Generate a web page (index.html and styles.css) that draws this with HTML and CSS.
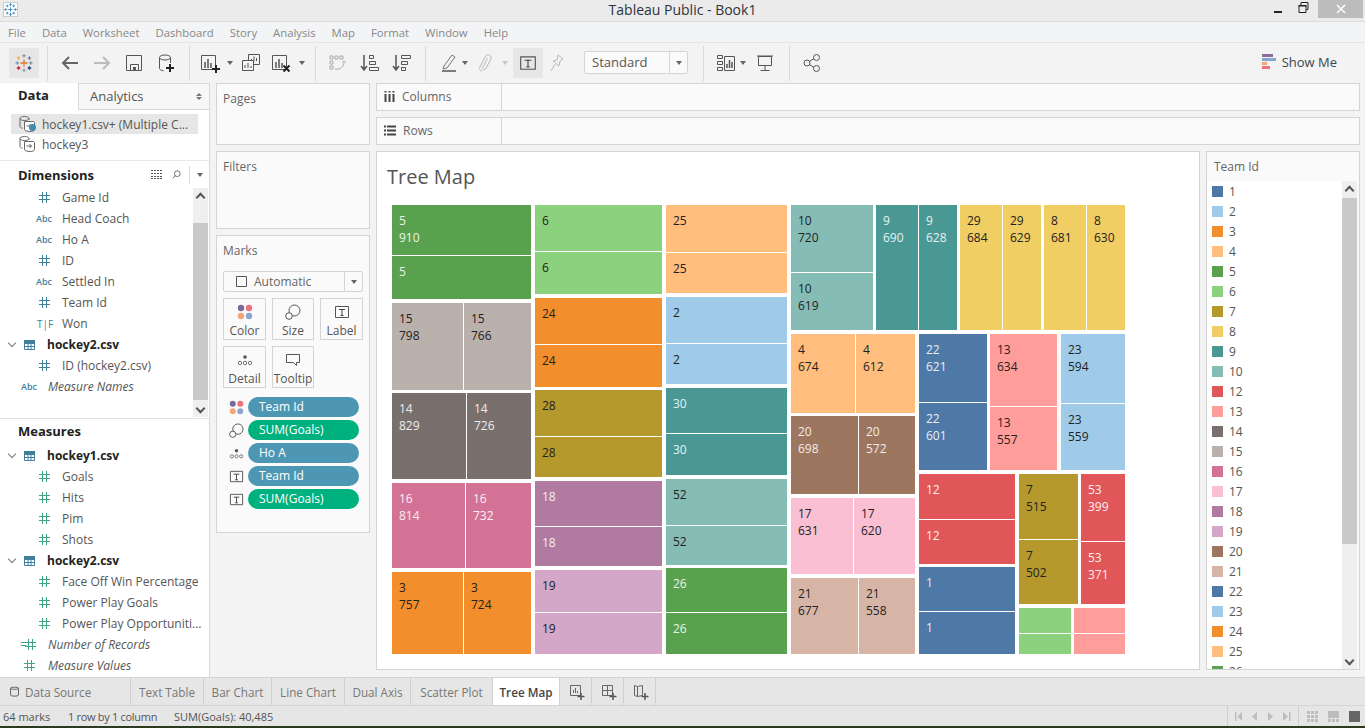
FILE: index.html
```html
<!DOCTYPE html>
<html lang="en">
<head>
    <meta charset="UTF-8">
    <title>Tableau Public - Book1</title>
    <link rel="stylesheet" href="styles.css">
</head>
<body>
<svg class="sprite" width="0" height="0">
    <defs>
        <symbol id="hash" viewBox="0 0 11 11"><path d="M3.500 0v11M7.500 0v11M0 3.500h11M0 7.500h11" fill="none" stroke="currentColor"/></symbol>
        <symbol id="table" viewBox="0 0 11 11"><path d="M.5 1.500h10v9H.5zM.5 4.500h10M.5 7.500h10M4 1.500v9M7 1.500v9" fill="none" stroke="currentColor"/><path d="M0 1h11v3H0z" fill="currentColor"/></symbol>
        <symbol id="tbox" viewBox="0 0 16 16"><path d="M1.500 2.500h13v11h-13z" fill="none" stroke="#555"/><path d="M5 5.500h6M8 5.500v6M6.500 11.500h3" fill="none" stroke="#444"/></symbol>
        <symbol id="dots" viewBox="0 0 16 16"><circle cx="4" cy="4" r="3.200" fill="#7a6a99"/><circle cx="12" cy="4" r="3.200" fill="#f0707f"/><circle cx="4" cy="12" r="3.200" fill="#f4a678"/><circle cx="12" cy="12" r="3.200" fill="#8ba7cf"/></symbol>
        <symbol id="size" viewBox="0 0 16 16"><circle cx="9.500" cy="6.500" r="5.500" fill="none" stroke="#555"/><circle cx="4" cy="12" r="3.300" fill="#fafafa" stroke="#555"/></symbol>
        <symbol id="detail" viewBox="0 0 16 16"><circle cx="8" cy="5" r="1.800" fill="#555"/><circle cx="3" cy="11" r="1.700" fill="none" stroke="#555" stroke-width=".8"/><circle cx="8" cy="11" r="1.700" fill="none" stroke="#555" stroke-width=".8"/><circle cx="13" cy="11" r="1.700" fill="none" stroke="#555" stroke-width=".8"/></symbol>
        <symbol id="cyl" viewBox="0 0 16 16">
            <path d="M1 2.500C1 1.300 3 .5 5.500 .5S10 1.300 10 2.500M1 2.500c0 1.200 2 2 4.500 2S10 3.700 10 2.500M1 2.500v8c0 .8 1 1.500 2.500 1.800M10 2.500v1.500" fill="none" stroke="#666"/>
            <path d="M5.500 5.500h8.500c1 0 1.500 .5 1.500 1.500v6.500c0 1.200-2 2-4.500 2s-5.500-.8-5.500-2z" fill="#fff" stroke="#666"/>
            <path d="M7.500 10h5M10.500 8l2 2-2 2" fill="none" stroke="#666"/>
        </symbol>
        <symbol id="logo" viewBox="0 0 20 20">
            <path d="M10 6v8M6 10h8" stroke="#e8762b" stroke-width="1.500"/>
            <path d="M4 2.500v4M2 4.500h4" stroke="#e8a33d" stroke-width="1"/>
            <path d="M10 0v4M8 2h4" stroke="#5b879b" stroke-width="1"/>
            <path d="M16 2.500v4M14 4.500h4" stroke="#5b6591" stroke-width="1"/>
            <path d="M2.500 8v4M.5 10h4" stroke="#5b879b" stroke-width="1"/>
            <path d="M17.500 8v4M15.500 10h4" stroke="#5b879b" stroke-width="1"/>
            <path d="M4 13.500v4M2 15.500h4" stroke="#c72035" stroke-width="1.500"/>
            <path d="M10 16v4M8 18h4" stroke="#7099a6" stroke-width="1"/>
            <path d="M16 13.500v4M14 15.500h4" stroke="#1f447e" stroke-width="1.500"/>
        </symbol>
    </defs>
</svg>

<div class="app">
    <div class="titlebar">
        <div class="appicon">
            <svg width="13" height="13" viewBox="0 0 20 20"><path d="M10 6.500v7M6.500 10h7M10 0v5M8 2.500h4M10 15v5M8 17.500h4M2.500 8v4M0 10h5M17.500 8v4M15 10h5M5 2.500v4M3 4.500h4M15 2.500v4M13 4.500h4M5 13.500v4M3 15.500h4M15 13.500v4M13 15.500h4" stroke="#3b86bd" stroke-width="1.300" fill="none"/></svg>
        </div>
        <div class="apptitle">Tableau Public - Book1</div>
        <div class="winbtns">
            <svg class="winbtn" width="10" height="14" viewBox="0 0 10 14"><path d="M1 11h8" stroke="#222" stroke-width="2"/></svg>
            <svg class="winbtn ml15" width="11" height="14" viewBox="0 0 10 14"><path d="M.5 4.500h7v7h-7zM2.500 4V1.500h7v7H8" fill="none" stroke="#222"/><path d="M0 4h8v1.500H0z" fill="#222"/></svg>
            <div class="closebtn">
                <svg width="10" height="10" viewBox="0 0 10 10"><path d="M1 1l8 8M9 1l-8 8" stroke="#fff" stroke-width="1.500"/></svg>
            </div>
        </div>
    </div>

    <div class="menubar">
        <span>File</span><span>Data</span><span>Worksheet</span><span>Dashboard</span><span>Story</span><span>Analysis</span><span>Map</span><span>Format</span><span>Window</span><span>Help</span>
    </div>

    <div class="toolbar">
        <div class="toolon"><svg width="18" height="18"><use href="#logo"/></svg></div>
        <i class="sep ml8"></i>
        <svg class="tool ml12" viewBox="0 0 20 20"><path d="M18 10H3M9 4l-6 6 6 6" fill="none" stroke="#666" stroke-width="2"/></svg>
        <svg class="tool ml12" viewBox="0 0 20 20"><path d="M2 10h15M11 4l6 6-6 6" fill="none" stroke="#bbb" stroke-width="2"/></svg>
        <svg class="tool ml12" viewBox="0 0 20 20"><path d="M2.500 2.500h15v15h-15zM6.500 17.500v-6h8v6" fill="none" stroke="#555"/><path d="M9 14h3v3H9z" fill="#555"/></svg>
        <svg class="tool ml12" viewBox="0 0 20 20"><ellipse cx="9" cy="4.500" rx="5.500" ry="2.500" fill="none" stroke="#555"/><path d="M3.500 4.500v11c0 1 1.500 2 4 2.300M14.500 4.500V10" fill="none" stroke="#555"/><path d="M14 11v8M10 15h8" stroke="#222" stroke-width="2"/></svg>
        <i class="sep ml13"></i>
        <svg class="tool ml10" viewBox="0 0 20 20"><path d="M1.500 2.500h14v14h-14z" fill="none" stroke="#555"/><path d="M5 9v6M8 6v9M11 10v5" stroke="#555" stroke-width="1.500"/><path d="M16 12v8M12 16h8" stroke="#222" stroke-width="2"/></svg>
        <i class="caret ml7"></i>
        <svg class="tool ml8" viewBox="0 0 20 20"><path d="M7.500 1.500h11v10h-11z" fill="#f3f3f3" stroke="#555"/><path d="M10.500 8V6M13 8V3.500M15.500 8V5" stroke="#555"/><path d="M1.500 7.500h11v10h-11z" fill="#f3f3f3" stroke="#555"/><path d="M4 15v-3M7 15v-5M10 15v-2" stroke="#555"/></svg>
        <svg class="tool ml10" viewBox="0 0 20 20"><path d="M1.500 2.500h14v14h-14z" fill="none" stroke="#555"/><path d="M5 9v6M8 6v9M11 10v5" stroke="#555" stroke-width="1.500"/><path d="M12.500 12.500l6 6M18.500 12.500l-6 6" stroke="#222" stroke-width="2"/></svg>
        <i class="caret ml8"></i>
        <i class="sep ml10"></i>
        <svg class="tool ml11 faded" viewBox="0 0 20 20"><path d="M3 3h3v3H3zM8 3h3v3H8zM13 3h3v3h-3zM3 8h3v3H3zM3 13h3v3H3zM8 16c4 1 8-1 9-6" fill="none" stroke="#999"/><path d="M15 10l2-2 2 2" fill="none" stroke="#999"/></svg>
        <svg class="tool ml13" viewBox="0 0 20 20"><path d="M4 2v14M1 13l3 4 3-4" fill="none" stroke="#555" stroke-width="1.500"/><path d="M9.500 2.500h4v3h-4zM9.500 8.500h6v3h-6zM9.500 14.500h9v3h-9z" fill="none" stroke="#555"/></svg>
        <svg class="tool ml12" viewBox="0 0 20 20"><path d="M4 2v14M1 13l3 4 3-4" fill="none" stroke="#555" stroke-width="1.500"/><path d="M9.500 2.500h9v3h-9zM9.500 8.500h6v3h-6zM9.500 14.500h4v3h-4z" fill="none" stroke="#555"/></svg>
        <i class="sep ml13"></i>
        <svg class="tool ml13" viewBox="0 0 20 20"><path d="M5 13l8-11 3 2-8 11-4 1z" fill="none" stroke="#777"/><path d="M3 18h14" stroke="#555" stroke-width="1.500"/></svg>
        <i class="caret ml3"></i>
        <svg class="tool ml7 faded" viewBox="0 0 20 20"><path d="M7 18c-2 0-3-2-2-4l5-10c1-2 3-3 4.500-2s2 3 1 5l-5 9c-.5 1-2 1-2.500 0s0-2 .5-3l4-8" fill="none" stroke="#aaa"/></svg>
        <i class="caret ml7 faded"></i>
        <div class="toolon ml5"><svg width="18" height="18"><use href="#tbox"/></svg></div>
        <svg class="tool ml4 faded" viewBox="0 0 20 20"><path d="M11 2l5 4-3 2-1 5-6-5 4-1zM8 11l-4 7" fill="none" stroke="#aaa"/></svg>
        <div class="select ml17"><span class="selecttext">Standard</span><span class="selectarrow"><i class="caret"></i></span></div>
        <i class="sep ml15"></i>
        <svg class="tool ml12" viewBox="0 0 20 20"><path d="M1.500 2.500h5v3h-5zM1.500 8.500h5v3h-5zM1.500 14.500h5v3h-5zM8.500 3.500h10v14h-10z" fill="none" stroke="#555"/><path d="M11 15v-4M13.500 15V7M16 15v-6" stroke="#555" stroke-width="1.500"/></svg>
        <i class="caret ml4"></i>
        <svg class="tool ml9" viewBox="0 0 20 20"><path d="M2 3h16M3.500 3.500h13v9h-13zM10 12.500v5M5.500 17.500h9" fill="none" stroke="#555"/></svg>
        <i class="sep ml14"></i>
        <svg class="tool ml12" viewBox="0 0 20 20"><circle cx="5" cy="10" r="3" fill="none" stroke="#555"/><circle cx="14.500" cy="4.500" r="3" fill="none" stroke="#555"/><circle cx="14.500" cy="15.500" r="3" fill="none" stroke="#555"/><path d="M7.500 8.500l4.500-3M7.500 11.500l4.500 3" stroke="#555"/></svg>
        <div class="showme">
            <svg width="14" height="16" viewBox="0 0 14 16"><path d="M0 0h11v3H0z" fill="#8b6f9b"/><path d="M0 4h14v3H0z" fill="#86a6cf"/><path d="M0 8h5v3H0z" fill="#f2a675"/><path d="M0 12h8v3H0z" fill="#f0707f"/></svg>
            <span>Show Me</span>
        </div>
    </div>

    <div class="workspace">
        <div class="datapane">
            <div class="panetabs">
                <div class="panetab active">Data</div>
                <div class="panetab">Analytics<span class="updown"></span></div>
            </div>
            <div class="sources">
                <div class="source selected"><svg width="16" height="16"><use href="#cyl"/></svg><i class="tick"></i><span>hockey1.csv+ (Multiple C...</span></div>
                <div class="source"><svg width="16" height="16"><use href="#cyl"/></svg><span>hockey3</span></div>
            </div>
            <div class="panehead dims">
                <span>Dimensions</span>
                <svg class="headicon" width="12" height="9" viewBox="0 0 12 9"><path d="M0 .5h12M0 3.500h12M0 6.500h12M0 8.500h12" stroke="#555" stroke-dasharray="2 1"/></svg>
                <svg class="headicon search" width="9" height="9" viewBox="0 0 11 11"><circle cx="6.500" cy="4.500" r="3.500" fill="none" stroke="#555"/><path d="M4 7L1 10" stroke="#555"/></svg>
                <i class="headsep"></i>
                <i class="caret"></i>
            </div>
            <div class="dimbody">
                <div class="fields">
                    <div class="field"><svg class="hash dim"><use href="#hash"/></svg>Game Id</div>
                    <div class="field"><b class="abc">Abc</b>Head Coach</div>
                    <div class="field"><b class="abc">Abc</b>Ho A</div>
                    <div class="field"><svg class="hash dim"><use href="#hash"/></svg>ID</div>
                    <div class="field"><b class="abc">Abc</b>Settled In</div>
                    <div class="field"><svg class="hash dim"><use href="#hash"/></svg>Team Id</div>
                    <div class="field"><b class="abc tf">T|F</b>Won</div>
                    <div class="tablehead"><i class="chev"></i><svg class="tableicon"><use href="#table"/></svg>hockey2.csv</div>
                    <div class="field"><svg class="hash dim"><use href="#hash"/></svg>ID (hockey2.csv)</div>
                    <div class="field calc"><b class="abc">Abc</b>Measure Names</div>
                </div>
                <div class="scroll">
                    <div class="scrollbtn"><i class="arrowup"></i></div>
                    <div class="thumb"></div>
                    <div class="scrollbtn low"><i class="arrowdown"></i></div>
                </div>
            </div>
            <div class="panehead meas">Measures</div>
            <div class="tablehead"><i class="chev"></i><svg class="tableicon"><use href="#table"/></svg>hockey1.csv</div>
            <div class="field"><svg class="hash mea"><use href="#hash"/></svg>Goals</div>
            <div class="field"><svg class="hash mea"><use href="#hash"/></svg>Hits</div>
            <div class="field"><svg class="hash mea"><use href="#hash"/></svg>Pim</div>
            <div class="field"><svg class="hash mea"><use href="#hash"/></svg>Shots</div>
            <div class="tablehead"><i class="chev"></i><svg class="tableicon"><use href="#table"/></svg>hockey2.csv</div>
            <div class="field"><svg class="hash mea"><use href="#hash"/></svg>Face Off Win Percentage</div>
            <div class="field"><svg class="hash mea"><use href="#hash"/></svg>Power Play Goals</div>
            <div class="field"><svg class="hash mea"><use href="#hash"/></svg>Power Play Opportuniti...</div>
            <div class="field calc records"><span class="eqhash">=</span><svg class="hash mea"><use href="#hash"/></svg>Number of Records</div>
            <div class="field calc"><svg class="hash mea"><use href="#hash"/></svg>Measure Values</div>
        </div>

        <div class="cards">
            <div class="card pages"><div class="cardtitle">Pages</div></div>
            <div class="card filters"><div class="cardtitle">Filters</div></div>
            <div class="card marks">
                <div class="cardtitle">Marks</div>
                <div class="marktype">
                    <svg width="11" height="11" viewBox="0 0 11 11"><path d="M.5.5h10v10H.5z" fill="none" stroke="#555"/></svg>
                    <span>Automatic</span>
                    <span class="marktypearrow"><i class="caret"></i></span>
                </div>
                <div class="markbtns">
                    <div class="markbtn"><svg width="16" height="16"><use href="#dots"/></svg>Color</div>
                    <div class="markbtn"><svg width="16" height="16"><use href="#size"/></svg>Size</div>
                    <div class="markbtn"><svg width="16" height="16"><use href="#tbox"/></svg>Label</div>
                    <div class="markbtn"><svg width="16" height="16"><use href="#detail"/></svg>Detail</div>
                    <div class="markbtn"><svg width="16" height="16" viewBox="0 0 16 16"><path d="M1.500 2.500h13v8h-3v3l-3-3h-7z" fill="none" stroke="#555"/></svg>Tooltip</div>
                </div>
                <div class="pills">
                    <div class="pillrow"><svg width="15" height="15"><use href="#dots"/></svg><span class="pill blue">Team Id</span></div>
                    <div class="pillrow"><svg width="15" height="15"><use href="#size"/></svg><span class="pill green">SUM(Goals)</span></div>
                    <div class="pillrow"><svg width="15" height="15"><use href="#detail"/></svg><span class="pill blue">Ho A</span></div>
                    <div class="pillrow"><svg width="15" height="15"><use href="#tbox"/></svg><span class="pill blue">Team Id</span></div>
                    <div class="pillrow"><svg width="15" height="15"><use href="#tbox"/></svg><span class="pill green">SUM(Goals)</span></div>
                </div>
            </div>
        </div>

        <div class="sheet">
            <div class="shelf">
                <div class="shelflabel"><svg width="11" height="11" viewBox="0 0 11 11"><path d="M1.500 3v8M5.500 3v8M9.500 3v8M1.500 0v1.500M5.500 0v1.500M9.500 0v1.500" stroke="#444" stroke-width="2"/></svg>Columns</div>
            </div>
            <div class="shelf">
                <div class="shelflabel"><svg width="12" height="11" viewBox="0 0 12 11"><path d="M3 1.500h9M3 5.500h9M3 9.500h9M0 1.500h2M0 5.500h2M0 9.500h2" stroke="#444" stroke-width="2"/></svg>Rows</div>
            </div>
            <div class="viewrow">
                <div class="chart">
                    <div class="charttitle">Tree Map</div>
                    <div class="treemap">
                        <div class="tile c5" style="left:0;top:0;width:139px;height:50px">5<br>910</div>
                        <div class="tile c5" style="left:0;top:51px;width:139px;height:43px">5</div>
                        <div class="tile c15" style="left:0;top:98px;width:71px;height:87px">15<br>798</div>
                        <div class="tile c15" style="left:72px;top:98px;width:67px;height:87px">15<br>766</div>
                        <div class="tile c14" style="left:0;top:188px;width:74px;height:86px">14<br>829</div>
                        <div class="tile c14" style="left:75px;top:188px;width:64px;height:86px">14<br>726</div>
                        <div class="tile c16" style="left:0;top:278px;width:73px;height:85px">16<br>814</div>
                        <div class="tile c16" style="left:74px;top:278px;width:65px;height:85px">16<br>732</div>
                        <div class="tile c3" style="left:0;top:367px;width:71px;height:82px">3<br>757</div>
                        <div class="tile c3" style="left:72px;top:367px;width:67px;height:82px">3<br>724</div>

                        <div class="tile c6" style="left:143px;top:0;width:127px;height:46px">6</div>
                        <div class="tile c6" style="left:143px;top:47px;width:127px;height:42px">6</div>
                        <div class="tile c3" style="left:143px;top:93px;width:127px;height:46px">24</div>
                        <div class="tile c3" style="left:143px;top:140px;width:127px;height:42px">24</div>
                        <div class="tile c7" style="left:143px;top:185px;width:127px;height:46px">28</div>
                        <div class="tile c7" style="left:143px;top:232px;width:127px;height:40px">28</div>
                        <div class="tile c18" style="left:143px;top:276px;width:127px;height:45px">18</div>
                        <div class="tile c18" style="left:143px;top:322px;width:127px;height:39px">18</div>
                        <div class="tile c19" style="left:143px;top:365px;width:127px;height:42px">19</div>
                        <div class="tile c19" style="left:143px;top:408px;width:127px;height:41px">19</div>

                        <div class="tile c4" style="left:274px;top:0;width:121px;height:47px">25</div>
                        <div class="tile c4" style="left:274px;top:48px;width:121px;height:40px">25</div>
                        <div class="tile c2" style="left:274px;top:92px;width:121px;height:46px">2</div>
                        <div class="tile c2" style="left:274px;top:139px;width:121px;height:40px">2</div>
                        <div class="tile c9" style="left:274px;top:183px;width:121px;height:45px">30</div>
                        <div class="tile c9" style="left:274px;top:229px;width:121px;height:41px">30</div>
                        <div class="tile c10" style="left:274px;top:274px;width:121px;height:46px">52</div>
                        <div class="tile c10" style="left:274px;top:321px;width:121px;height:39px">52</div>
                        <div class="tile c5" style="left:274px;top:363px;width:121px;height:44px">26</div>
                        <div class="tile c5" style="left:274px;top:408px;width:121px;height:41px">26</div>

                        <div class="tile c10" style="left:399px;top:0;width:82px;height:67px">10<br>720</div>
                        <div class="tile c10" style="left:399px;top:68px;width:82px;height:57px">10<br>619</div>
                        <div class="tile c9" style="left:484px;top:0;width:42px;height:125px">9<br>690</div>
                        <div class="tile c9" style="left:527px;top:0;width:38px;height:125px">9<br>628</div>
                        <div class="tile c8" style="left:568px;top:0;width:42px;height:125px">29<br>684</div>
                        <div class="tile c8" style="left:611px;top:0;width:38px;height:125px">29<br>629</div>
                        <div class="tile c8" style="left:652px;top:0;width:42px;height:125px">8<br>681</div>
                        <div class="tile c8" style="left:695px;top:0;width:38px;height:125px">8<br>630</div>

                        <div class="tile c4" style="left:399px;top:129px;width:64px;height:79px">4<br>674</div>
                        <div class="tile c4" style="left:464px;top:129px;width:59px;height:79px">4<br>612</div>
                        <div class="tile c20" style="left:399px;top:211px;width:67px;height:78px">20<br>698</div>
                        <div class="tile c20" style="left:467px;top:211px;width:56px;height:78px">20<br>572</div>
                        <div class="tile c17" style="left:399px;top:293px;width:62px;height:76px">17<br>631</div>
                        <div class="tile c17" style="left:462px;top:293px;width:61px;height:76px">17<br>620</div>
                        <div class="tile c21" style="left:399px;top:373px;width:67px;height:76px">21<br>677</div>
                        <div class="tile c21" style="left:467px;top:373px;width:56px;height:76px">21<br>558</div>

                        <div class="tile c1" style="left:527px;top:129px;width:68px;height:68px">22<br>621</div>
                        <div class="tile c1" style="left:527px;top:198px;width:68px;height:67px">22<br>601</div>
                        <div class="tile c13" style="left:598px;top:129px;width:67px;height:72px">13<br>634</div>
                        <div class="tile c13" style="left:598px;top:202px;width:67px;height:63px">13<br>557</div>
                        <div class="tile c2" style="left:669px;top:129px;width:64px;height:69px">23<br>594</div>
                        <div class="tile c2" style="left:669px;top:199px;width:64px;height:66px">23<br>559</div>

                        <div class="tile c12" style="left:527px;top:269px;width:96px;height:45px">12</div>
                        <div class="tile c12" style="left:527px;top:315px;width:96px;height:44px">12</div>
                        <div class="tile c1" style="left:527px;top:362px;width:96px;height:44px">1</div>
                        <div class="tile c1" style="left:527px;top:407px;width:96px;height:42px">1</div>
                        <div class="tile c7" style="left:627px;top:269px;width:59px;height:65px">7<br>515</div>
                        <div class="tile c7" style="left:627px;top:335px;width:59px;height:64px">7<br>502</div>
                        <div class="tile c12" style="left:689px;top:269px;width:44px;height:67px">53<br>399</div>
                        <div class="tile c12" style="left:689px;top:337px;width:44px;height:62px">53<br>371</div>
                        <div class="tile c6" style="left:627px;top:403px;width:52px;height:25px"></div>
                        <div class="tile c6" style="left:627px;top:429px;width:52px;height:20px"></div>
                        <div class="tile c13" style="left:682px;top:403px;width:51px;height:25px"></div>
                        <div class="tile c13" style="left:682px;top:429px;width:51px;height:20px"></div>
                    </div>
                </div>
                <div class="legend">
                    <div class="legendtitle">Team Id</div>
                    <div class="legendbody">
                        <div class="legenditems">
                            <div class="legenditem"><i class="swatch c1"></i>1</div>
                            <div class="legenditem"><i class="swatch c2"></i>2</div>
                            <div class="legenditem"><i class="swatch c3"></i>3</div>
                            <div class="legenditem"><i class="swatch c4"></i>4</div>
                            <div class="legenditem"><i class="swatch c5"></i>5</div>
                            <div class="legenditem"><i class="swatch c6"></i>6</div>
                            <div class="legenditem"><i class="swatch c7"></i>7</div>
                            <div class="legenditem"><i class="swatch c8"></i>8</div>
                            <div class="legenditem"><i class="swatch c9"></i>9</div>
                            <div class="legenditem"><i class="swatch c10"></i>10</div>
                            <div class="legenditem"><i class="swatch c12"></i>12</div>
                            <div class="legenditem"><i class="swatch c13"></i>13</div>
                            <div class="legenditem"><i class="swatch c14"></i>14</div>
                            <div class="legenditem"><i class="swatch c15"></i>15</div>
                            <div class="legenditem"><i class="swatch c16"></i>16</div>
                            <div class="legenditem"><i class="swatch c17"></i>17</div>
                            <div class="legenditem"><i class="swatch c18"></i>18</div>
                            <div class="legenditem"><i class="swatch c19"></i>19</div>
                            <div class="legenditem"><i class="swatch c20"></i>20</div>
                            <div class="legenditem"><i class="swatch c21"></i>21</div>
                            <div class="legenditem"><i class="swatch c1"></i>22</div>
                            <div class="legenditem"><i class="swatch c2"></i>23</div>
                            <div class="legenditem"><i class="swatch c3"></i>24</div>
                            <div class="legenditem"><i class="swatch c4"></i>25</div>
                            <div class="legenditem"><i class="swatch c5"></i>26</div>
                        </div>
                        <div class="scroll legendscroll">
                            <div class="scrollbtn"><i class="arrowup"></i></div>
                            <div class="thumb"></div>
                            <div class="scrollbtn low"><i class="arrowdown"></i></div>
                        </div>
                    </div>
                </div>
            </div>
        </div>
    </div>

    <div class="tabs">
        <div class="tab datasource"><svg width="9" height="11" viewBox="0 0 9 11"><path d="M.5 2c0-1 8-1 8 0v7c0 1.500-8 1.500-8 0zM.5 2.500c0 1 8 1 8 0" fill="none" stroke="#666"/></svg>Data Source</div>
        <div class="tab w73">Text Table</div>
        <div class="tab w68">Bar Chart</div>
        <div class="tab w73">Line Chart</div>
        <div class="tab w66">Dual Axis</div>
        <div class="tab w82">Scatter Plot</div>
        <div class="tab current">Tree Map</div>
        <div class="tab newtab"><svg width="16" height="16" viewBox="0 0 16 16"><path d="M1.500 1.500h10v10h-10z" fill="none" stroke="#666"/><path d="M4.500 9V6M6.500 9V4M8.500 9V7" stroke="#666"/><path d="M12 9v7M8.500 12.500h7" stroke="#555" stroke-width="1.500"/></svg></div>
        <div class="tab newtab"><svg width="16" height="16" viewBox="0 0 16 16"><path d="M1.500 1.500h10v10h-10zM1.500 6.500h10M6.500 1.500v10" fill="none" stroke="#666"/><path d="M12 9v7M8.500 12.500h7" stroke="#555" stroke-width="1.500"/></svg></div>
        <div class="tab newtab"><svg width="16" height="16" viewBox="0 0 16 16"><path d="M1.500 1.500l3 1 5-1v10l-5 1-3-1zM4.500 2.500v10" fill="none" stroke="#666"/><path d="M12 9v7M8.500 12.500h7" stroke="#555" stroke-width="1.500"/></svg></div>
    </div>

    <div class="statusbar">
        <span class="st1">64 marks</span>
        <span class="st2">1 row by 1 column</span>
        <span class="st3">SUM(Goals): 40,485</span>
        <div class="pager">
            <svg width="56" height="9" viewBox="0 0 56 9"><path d="M0 0h1.500v9H0zM7 0v9L2.500 4.500zM22 0v9l-5-4.500zM33 0v9l5-4.500zM48 0v9l5-4.500zM54 0h1.500v9H54z" fill="#bdbdbd"/></svg>
        </div>
        <div class="viewicons">
            <svg width="11" height="11" viewBox="0 0 11 11"><path d="M0 0h3v3H0zM4 0h3v3H4zM8 0h3v3H8zM0 4h3v3H0zM4 4h3v3H4zM8 4h3v3H8zM0 8h3v3H0zM4 8h3v3H4zM8 8h3v3H8z" fill="#bdbdbd"/></svg>
            <svg width="11" height="11" viewBox="0 0 11 11"><path d="M0 0h11v7H0zM0 8h3v3H0zM4 8h3v3H4zM8 8h3v3H8z" fill="#bdbdbd"/></svg>
            <svg width="11" height="11" viewBox="0 0 11 11"><path d="M0 0h11v11H0z" fill="#666"/></svg>
        </div>
    </div>
    <div class="desktopedge"></div>
</div>
</body>
</html>
```

FILE: styles.css
```css
* {
    box-sizing: border-box;
}
html, body {
    margin: 0;
    padding: 0;
    height: 100%;
    overflow: hidden;
}
body {
    font-family: "Open Sans", "Noto Sans", sans-serif;
    font-size: 12px;
    color: #555;
    background: #f3f3f3;
}
i {
    display: block;
    flex: none;
}
.sprite {
    display: block;
    height: 0;
}
.app {
    display: flex;
    flex-direction: column;
    width: 1365px;
    height: 728px;
}

/* title bar */
.titlebar {
    position: relative;
    display: flex;
    align-items: flex-start;
    height: 22px;
    background: #ebebeb;
    border-bottom: 1px solid #dcdcdc;
    flex: none;
}
.appicon {
    display: flex;
    align-items: center;
    justify-content: center;
    width: 15px;
    height: 15px;
    margin: 2px 0 0 3px;
    background: #fff;
    border: 1px solid #ccc;
}
.apptitle {
    position: absolute;
    left: 0;
    right: 0;
    top: 0;
    text-align: center;
    font-size: 14px;
    line-height: 20px;
    color: #2b3440;
}
.winbtns {
    display: flex;
    align-items: flex-start;
    margin-left: auto;
    padding-right: 2px;
}
.winbtn {
    margin-top: 1px;
}
.closebtn {
    display: flex;
    align-items: center;
    justify-content: center;
    width: 45px;
    height: 18px;
    margin-left: 9px;
    background: #bcbcbc;
}

/* menu */
.menubar {
    display: flex;
    align-items: center;
    gap: 16px;
    height: 21px;
    padding-left: 8px;
    background: #f3f4f6;
    border-bottom: 1px solid #e3e3e3;
    font-size: 11.3px;
    color: #888;
    flex: none;
}

/* toolbar */
.toolbar {
    display: flex;
    align-items: center;
    height: 40px;
    padding-left: 9px;
    background: #f3f3f3;
    flex: none;
}
.tool {
    width: 20px;
    height: 20px;
    flex: none;
}
.faded {
    opacity: .8;
}
.toolon {
    display: flex;
    align-items: center;
    justify-content: center;
    width: 30px;
    height: 30px;
    background: #e6e6e6;
    flex: none;
}
.sep {
    width: 1px;
    height: 35px;
    background: #d8d8d8;
}
.caret {
    width: 0;
    height: 0;
    border-left: 3.5px solid transparent;
    border-right: 3.5px solid transparent;
    border-top: 4px solid #666;
}
.caret.faded {
    border-top-color: #bbb;
}
.ml3 { margin-left: 3px; }
.ml4 { margin-left: 4px; }
.ml5 { margin-left: 5px; }
.ml7 { margin-left: 7px; }
.ml8 { margin-left: 8px; }
.ml9 { margin-left: 9px; }
.ml10 { margin-left: 10px; }
.ml11 { margin-left: 11px; }
.ml12 { margin-left: 12px; }
.ml13 { margin-left: 13px; }
.ml14 { margin-left: 14px; }
.ml15 { margin-left: 15px; }
.ml17 { margin-left: 17px; }
.select {
    display: flex;
    width: 104px;
    height: 23px;
    margin-top: -1px;
    background: #fafafa;
    border: 1px solid #d4d4d4;
    border-radius: 2px;
    flex: none;
}
.selecttext {
    flex: 1;
    padding-left: 7px;
    font-size: 13px;
    line-height: 20px;
    color: #555;
}
.selectarrow {
    display: flex;
    align-items: center;
    justify-content: center;
    width: 18px;
    border-left: 1px solid #d4d4d4;
}
.showme {
    display: flex;
    align-items: center;
    gap: 6px;
    margin-left: auto;
    padding-right: 28px;
    padding-bottom: 2px;
    font-size: 13px;
    color: #3d4650;
}

/* workspace */
.workspace {
    display: flex;
    height: 594px;
    flex: none;
}
.datapane {
    width: 210px;
    background: #fff;
    border-right: 1px solid #d8d8d8;
    flex: none;
    overflow: hidden;
}
.panetabs {
    display: flex;
    height: 27px;
}
.panetab {
    position: relative;
    flex: 1;
    padding-left: 11px;
    font-size: 13px;
    line-height: 25px;
    color: #555;
    background: #f7f7f7;
    border-top: 1px solid #d8d8d8;
    border-left: 1px solid #d8d8d8;
    border-bottom: 1px solid #d8d8d8;
}
.panetab.active {
    flex: none;
    width: 78px;
    padding-left: 18px;
    font-weight: 700;
    color: #222;
    background: #fff;
    border: 0;
}
.updown {
    position: absolute;
    right: 7px;
    top: 9px;
    width: 6px;
    height: 7px;
}
.updown::before, .updown::after {
    content: "";
    position: absolute;
    left: 0;
    border-left: 3px solid transparent;
    border-right: 3px solid transparent;
}
.updown::before {
    top: 0;
    border-bottom: 3px solid #777;
}
.updown::after {
    bottom: 0;
    border-top: 3px solid #777;
}
.sources {
    height: 50px;
    padding: 4px 11px 0;
}
.source {
    position: relative;
    display: flex;
    align-items: center;
    gap: 7px;
    height: 20px;
    padding-left: 8px;
    width: 187px;
    color: #555;
    white-space: nowrap;
}
.source.selected {
    background: #e6e6e6;
}
.tick {
    position: absolute;
    left: 18px;
    top: 10px;
    width: 7px;
    height: 7px;
    border-radius: 50%;
    background: #3f8cad;
}
.panehead {
    font-size: 13px;
    font-weight: 700;
    color: #222;
    padding-left: 18px;
}
.dims {
    display: flex;
    align-items: center;
    height: 28px;
    border-top: 1px solid #e8e8e8;
}
.headicon {
    flex: none;
}
.dims span {
    margin-right: 57px;
}
.search {
    margin-left: 9px;
}
.headsep {
    width: 1px;
    height: 18px;
    margin: 0 7px 0 8px;
    background: #ddd;
}
.dimbody {
    display: flex;
    height: 231px;
    border-bottom: 1px solid #e0e0e0;
}
.fields {
    flex: 1;
    margin-top: -1px;
}
.scroll {
    display: flex;
    flex-direction: column;
    width: 15px;
    height: 229px;
    margin-right: 1px;
    background: #efefef;
    flex: none;
}
.scrollbtn {
    display: flex;
    justify-content: center;
    align-items: flex-start;
    padding-top: 6px;
    height: 35px;
    background: #efefef;
}
.scrollbtn.low {
    align-items: flex-end;
    padding: 0 0 5px;
    height: 17px;
    flex: 1;
}
.thumb {
    height: 177px;
    background: #c9c9c9;
}
.arrowup, .arrowdown {
    width: 7px;
    height: 7px;
    border-left: 2px solid #555;
    border-top: 2px solid #555;
    transform: rotate(45deg);
}
.arrowdown {
    transform: rotate(225deg);
}
.meas {
    height: 26px;
    line-height: 24px;
}
.field {
    position: relative;
    display: flex;
    align-items: center;
    height: 21px;
    padding-left: 62px;
    color: #555;
    white-space: nowrap;
}
.hash {
    position: absolute;
    left: 39px;
    top: 5px;
    width: 11px;
    height: 11px;
}
.hash.dim {
    color: #3f7f9c;
}
.hash.mea {
    color: #3fa583;
}
.abc {
    position: absolute;
    left: 36px;
    top: 5px;
    font-size: 9px;
    font-weight: 600;
    line-height: 12px;
    color: #3f7f9c;
}
.tf {
    left: 37px;
    font-weight: 400;
    font-size: 10px;
}
.calc {
    padding-left: 48px;
    font-style: italic;
}
.calc .abc {
    left: 21px;
    font-style: normal;
}
.calc .hash {
    left: 24px;
}
.records .hash {
    left: 25px;
}
.eqhash {
    position: absolute;
    left: 20px;
    top: 2px;
    font-style: normal;
    color: #3fa583;
}
.tablehead {
    display: flex;
    align-items: center;
    height: 21px;
    padding-left: 9px;
    font-size: 12px;
    font-weight: 700;
    color: #222;
}
.chev {
    width: 6px;
    height: 6px;
    margin-top: -3px;
    border-right: 1px solid #777;
    border-bottom: 1px solid #777;
    transform: rotate(45deg);
}
.tableicon {
    width: 11px;
    height: 11px;
    margin: 0 12px 0 9px;
    color: #3f7f9c;
    flex: none;
}

/* pages, filters, marks */
.cards {
    display: flex;
    flex-direction: column;
    gap: 6px;
    width: 154px;
    margin-left: 6px;
    flex: none;
}
.card {
    background: #fafafa;
    border: 1px solid #d4d4d4;
    padding: 8px 6px 0;
}
.cardtitle {
    line-height: 14px;
    color: #666;
}
.pages {
    height: 62px;
}
.filters {
    height: 78px;
}
.marks {
    height: 298px;
}
.marktype {
    display: flex;
    align-items: center;
    width: 140px;
    height: 21px;
    margin-top: 13px;
    padding-left: 12px;
    background: #fafafa;
    border: 1px solid #d4d4d4;
    border-radius: 2px;
    color: #666;
}
.marktype span:nth-child(2) {
    flex: 1;
    margin-left: 7px;
}
.marktypearrow {
    display: flex;
    align-items: center;
    justify-content: center;
    width: 18px;
    height: 100%;
    border-left: 1px solid #d4d4d4;
}
.markbtns {
    display: grid;
    grid-template-columns: 43px 42px 43px;
    gap: 6px;
    margin-top: 6px;
}
.markbtn {
    display: flex;
    flex-direction: column;
    align-items: center;
    justify-content: space-between;
    height: 42px;
    padding: 5px 0 1px;
    border: 1px solid #d4d4d4;
    line-height: 14px;
    color: #555;
}
.markbtn svg {
    flex: none;
}
.pills {
    display: flex;
    flex-direction: column;
    gap: 3px;
    margin-top: 9px;
}
.pillrow {
    display: flex;
    align-items: center;
    gap: 4px;
    padding-left: 6px;
}
.pill {
    width: 111px;
    height: 20px;
    padding-left: 11px;
    border-radius: 10px;
    line-height: 19px;
    color: #fff;
}
.pill.blue {
    background: #4e97b4;
}
.pill.green {
    background: #00b180;
}

/* shelves and view */
.sheet {
    display: flex;
    flex-direction: column;
    gap: 6px;
    width: 984px;
    margin-left: 6px;
    flex: none;
}
.shelf {
    height: 28px;
    background: #fafafa;
    border: 1px solid #d4d4d4;
    flex: none;
}
.shelflabel {
    display: flex;
    align-items: center;
    gap: 7px;
    width: 125px;
    height: 100%;
    padding: 0 0 2px 7px;
    border-right: 1px solid #d4d4d4;
    color: #666;
}
.viewrow {
    display: flex;
    gap: 6px;
    height: 519px;
    flex: none;
}
.chart {
    width: 824px;
    background: #fff;
    border: 1px solid #d4d4d4;
    flex: none;
}
.charttitle {
    height: 53px;
    padding: 11px 0 0 10px;
    font-size: 20px;
    line-height: 28px;
    color: #555;
}
.treemap {
    position: relative;
    width: 733px;
    height: 449px;
    margin-left: 15px;
}
.tile {
    position: absolute;
    padding: 7px 0 0 7px;
    font-size: 12px;
    line-height: 17px;
    color: #222;
    overflow: hidden;
}
.c1 { background: #4e79a7; color: #e8eef5; }
.c2 { background: #a0cbe8; }
.c3 { background: #f28e2b; }
.c4 { background: #ffbe7d; }
.c5 { background: #59a14f; color: #eaf5e8; }
.c6 { background: #8cd17d; }
.c7 { background: #b6992d; }
.c8 { background: #f1ce63; }
.c9 { background: #499894; color: #e6f3f2; }
.c10 { background: #86bcb6; }
.c12 { background: #e15759; color: #fdeeee; }
.c13 { background: #ff9d9a; }
.c14 { background: #79706e; color: #eeeceb; }
.c15 { background: #bab0ac; }
.c16 { background: #d37295; color: #fbeef3; }
.c17 { background: #fabfd2; }
.c18 { background: #b07aa1; color: #f6edf3; }
.c19 { background: #d4a6c8; }
.c20 { background: #9d7660; color: #f3ece8; }
.c21 { background: #d7b5a6; }

.legend {
    width: 154px;
    display: flex;
    flex-direction: column;
    background: #fafafa;
    border: 1px solid #d4d4d4;
    flex: none;
}
.legendtitle {
    height: 29px;
    padding-left: 7px;
    line-height: 30px;
    color: #666;
    flex: none;
}
.legendbody {
    display: flex;
    height: 488px;
    background: #fff;
    overflow: hidden;
    margin-right: 2px;
}
.legenditems {
    flex: 1;
    padding-left: 5px;
    height: 488px;
    overflow: hidden;
}
.legenditem {
    display: flex;
    align-items: center;
    gap: 6px;
    height: 20px;
    color: #555;
}
.swatch {
    width: 11px;
    height: 11px;
}
.legendscroll {
    height: 488px;
    margin-right: 0;
}
.legendscroll .scrollbtn {
    height: 17px;
}
.legendscroll .thumb {
    height: 346px;
}
.legendscroll .scrollbtn.low {
    height: auto;
}

/* sheet tabs */
.tabs {
    display: flex;
    height: 29px;
    background: #e6e6e6;
    border-top: 1px solid #d4d4d4;
    border-bottom: 1px solid #d4d4d4;
    font-size: 11.7px;
    flex: none;
}
.tab {
    display: flex;
    align-items: center;
    justify-content: center;
    height: 100%;
    border-right: 1px solid #d0d0d0;
    color: #777;
    white-space: nowrap;
    flex: none;
}
.datasource {
    justify-content: flex-start;
    gap: 6px;
    width: 131px;
    padding-left: 10px;
}
.w73 { width: 73px; }
.w68 { width: 68px; }
.w66 { width: 66px; }
.w82 { width: 82px; }
.current {
    width: 67px;
    background: #fff;
    font-weight: 600;
    color: #444;
}
.newtab {
    width: 32px;
    padding-left: 2px;
}

/* status bar */
.statusbar {
    display: flex;
    align-items: center;
    height: 20px;
    background: #e6e6e6;
    font-size: 11px;
    color: #555;
    flex: none;
}
.st1 {
    width: 68px;
    padding-left: 3px;
}
.st2 {
    width: 106px;
    letter-spacing: -.3px;
}
.pager {
    display: flex;
    align-items: center;
    justify-content: center;
    width: 72px;
    height: 100%;
    margin-left: auto;
    border-left: 1px solid #d0d0d0;
    border-right: 1px solid #d0d0d0;
}
.viewicons {
    display: flex;
    gap: 10px;
    padding: 0 5px 0 8px;
}
.desktopedge {
    height: 2px;
    background: #2c3a1f;
    flex: none;
}
```
